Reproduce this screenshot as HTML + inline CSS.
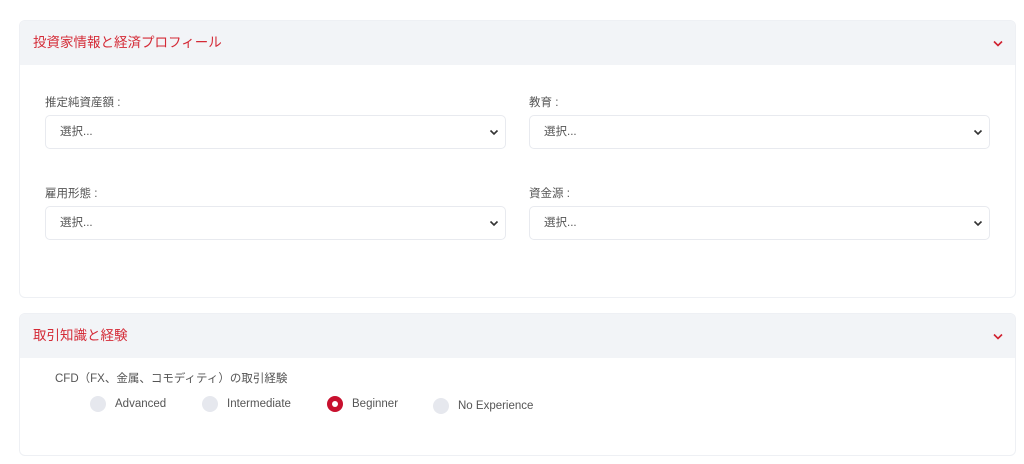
<!DOCTYPE html>
<html><head><meta charset="utf-8"><style>
*{box-sizing:border-box;margin:0;padding:0}
body{width:1024px;height:464px;background:#fff;font-family:"Liberation Sans","Noto Sans CJK JP",sans-serif;position:relative;overflow:hidden}
.panel{position:absolute;left:19px;width:997px;border:1px solid #eef0f4;border-radius:6px;background:#fff;overflow:hidden}
.hd{height:44px;background:#f2f4f7;color:#d42a36;font-size:13.5px;line-height:44px;padding-left:13px;position:relative}
.chev{position:absolute;right:12px;top:19px}
.lbl{position:absolute;font-size:11.5px;color:#555}
.sel{position:absolute;width:461px;height:34px;border:1px solid #e8eaef;border-radius:5px;font-size:11.5px;color:#555;line-height:32px;padding-left:14px}
.sel svg{position:absolute;right:6px;top:13px}
.r{position:absolute;width:16px;height:16px;border-radius:50%;background:#e6e8ee}
.r.on{background:#c8102e}
.r.on::after{content:"";position:absolute;left:5px;top:5px;width:6px;height:6px;border-radius:50%;background:#fff}
.t{position:absolute;font-size:11.5px;color:#555}
</style></head><body>
<div class="panel" style="top:20px;height:278px">
<div class="hd">投資家情報と経済プロフィール<svg class="chev" width="10" height="7" viewBox="0 0 10 7"><path d="M1 1.5l4 4 4-4" stroke="#d0212f" stroke-width="1.6" fill="none"/></svg></div>
</div>
<div class="lbl" style="left:45px;top:94px">推定純資産額 :</div>
<div class="lbl" style="left:529px;top:94px">教育 :</div>
<div class="sel" style="left:45px;top:115px">選択...<svg width="10" height="7" viewBox="0 0 10 7"><path d="M1.5 1.5l3.5 3.5 3.5-3.5" stroke="#333" stroke-width="1.6" fill="none"/></svg></div>
<div class="sel" style="left:529px;top:115px">選択...<svg width="10" height="7" viewBox="0 0 10 7"><path d="M1.5 1.5l3.5 3.5 3.5-3.5" stroke="#333" stroke-width="1.6" fill="none"/></svg></div>
<div class="lbl" style="left:45px;top:185px">雇用形態 :</div>
<div class="lbl" style="left:529px;top:185px">資金源 :</div>
<div class="sel" style="left:45px;top:206px">選択...<svg width="10" height="7" viewBox="0 0 10 7"><path d="M1.5 1.5l3.5 3.5 3.5-3.5" stroke="#333" stroke-width="1.6" fill="none"/></svg></div>
<div class="sel" style="left:529px;top:206px">選択...<svg width="10" height="7" viewBox="0 0 10 7"><path d="M1.5 1.5l3.5 3.5 3.5-3.5" stroke="#333" stroke-width="1.6" fill="none"/></svg></div>

<div class="panel" style="top:313px;height:143px">
<div class="hd">取引知識と経験<svg class="chev" width="10" height="7" viewBox="0 0 10 7"><path d="M1 1.5l4 4 4-4" stroke="#d0212f" stroke-width="1.6" fill="none"/></svg></div>
</div>
<div class="t" style="left:55px;top:370px">CFD（FX、金属、コモディティ）の取引経験</div>
<div class="r" style="left:90px;top:396px"></div><div class="t" style="left:115px;top:398px">Advanced</div>
<div class="r" style="left:202px;top:396px"></div><div class="t" style="left:227px;top:398px">Intermediate</div>
<div class="r on" style="left:327px;top:396px"></div><div class="t" style="left:352px;top:398px">Beginner</div>
<div class="r" style="left:433px;top:398px"></div><div class="t" style="left:458px;top:400px">No Experience</div>
</body></html>
